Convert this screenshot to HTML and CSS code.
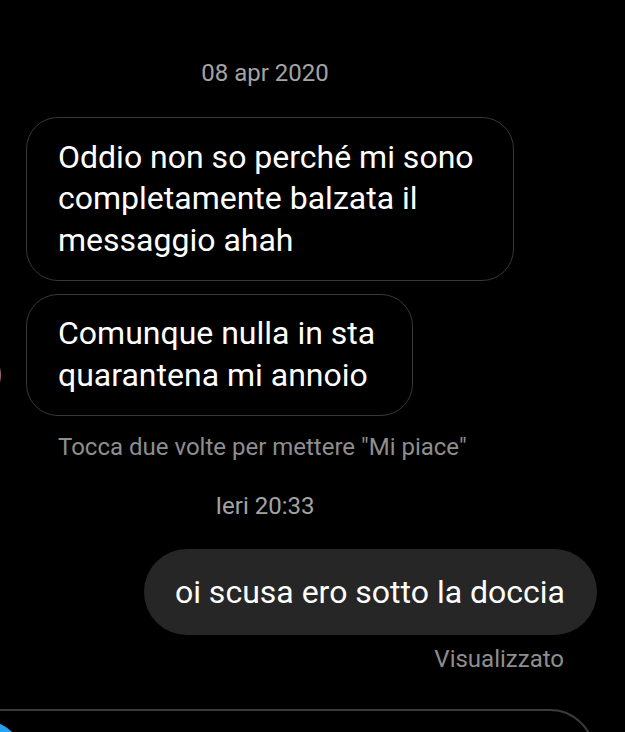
FILE: index.html
```html
<!DOCTYPE html>
<html>
<head>
  <title>Chat</title>
  <link rel="stylesheet" href="styles.css">
</head>
<body>
  <div class="thread">
    <div class="stamp first">08 apr 2020</div>

    <div class="bubble in wide">Oddio non so perché mi sono<br>completamente balzata il<br>messaggio ahah</div>

    <div class="row">
      <div class="avatar"></div>
      <div class="bubble in">Comunque nulla in sta<br>quarantena mi annoio</div>
    </div>

    <div class="hint">Tocca due volte per mettere "Mi piace"</div>

    <div class="stamp">Ieri 20:33</div>

    <div class="bubble out">oi scusa ero sotto la doccia</div>

    <div class="seen">Visualizzato</div>
  </div>

  <div class="composer">
    <div class="camera"></div>
  </div>
</body>
</html>
```

FILE: styles.css
```css
html, body {
  overflow: hidden;
}
body {
  margin: 0;
  background: #000;
  font-family: 'Roboto', 'Liberation Sans', sans-serif;
  color: #fff;
}
.thread {
  display: flex;
  flex-direction: column;
  align-items: flex-start;
  padding: 59px 28px 0 26px;
}
.stamp {
  align-self: stretch;
  text-align: center;
  padding-right: 93px;
  font-size: 24px;
  line-height: 28px;
  color: #a3a3a3;
  margin-top: 31px;
}
.stamp.first {
  margin-top: 0;
}
.bubble {
  box-sizing: border-box;
  max-width: 488px;
  font-size: 32px;
  line-height: 41.5px;
  border-radius: 32px;
  white-space: nowrap;
}
.bubble.in {
  border: 1.5px solid #383838;
  padding: 18.5px 37px 18.5px 31px;
}
.wide {
  width: 488px;
  margin-top: 30px;
}
.row {
  display: flex;
  align-items: flex-end;
  gap: 25px;
  margin-top: 13px;
}
.avatar {
  width: 56px;
  height: 56px;
  margin-left: -81px;
  margin-bottom: 13px;
  border-radius: 50%;
  background: radial-gradient(circle at 90% 50%, #a86a84, #4a2233);
}
.hint {
  margin: 17px 0 0 32px;
  font-size: 24px;
  line-height: 28px;
  color: #8e8e8e;
}
.bubble.out {
  align-self: flex-end;
  margin-top: 29px;
  background: #262626;
  padding: 23px 32px 22px 31px;
  border-radius: 43px;
}
.seen {
  align-self: flex-end;
  margin: 10px 33px 0 0;
  font-size: 24px;
  line-height: 28px;
  color: #8e8e8e;
}
.composer {
  height: 90px;
  margin: 36px 30px 0 -60px;
  border: 2px solid #3a3a3a;
  border-radius: 48px;
  padding: 10px 6px;
  box-sizing: border-box;
}
.camera {
  width: 72px;
  height: 72px;
  margin-left: 2px;
  border-radius: 50%;
  background: #25a2ee;
}
```
